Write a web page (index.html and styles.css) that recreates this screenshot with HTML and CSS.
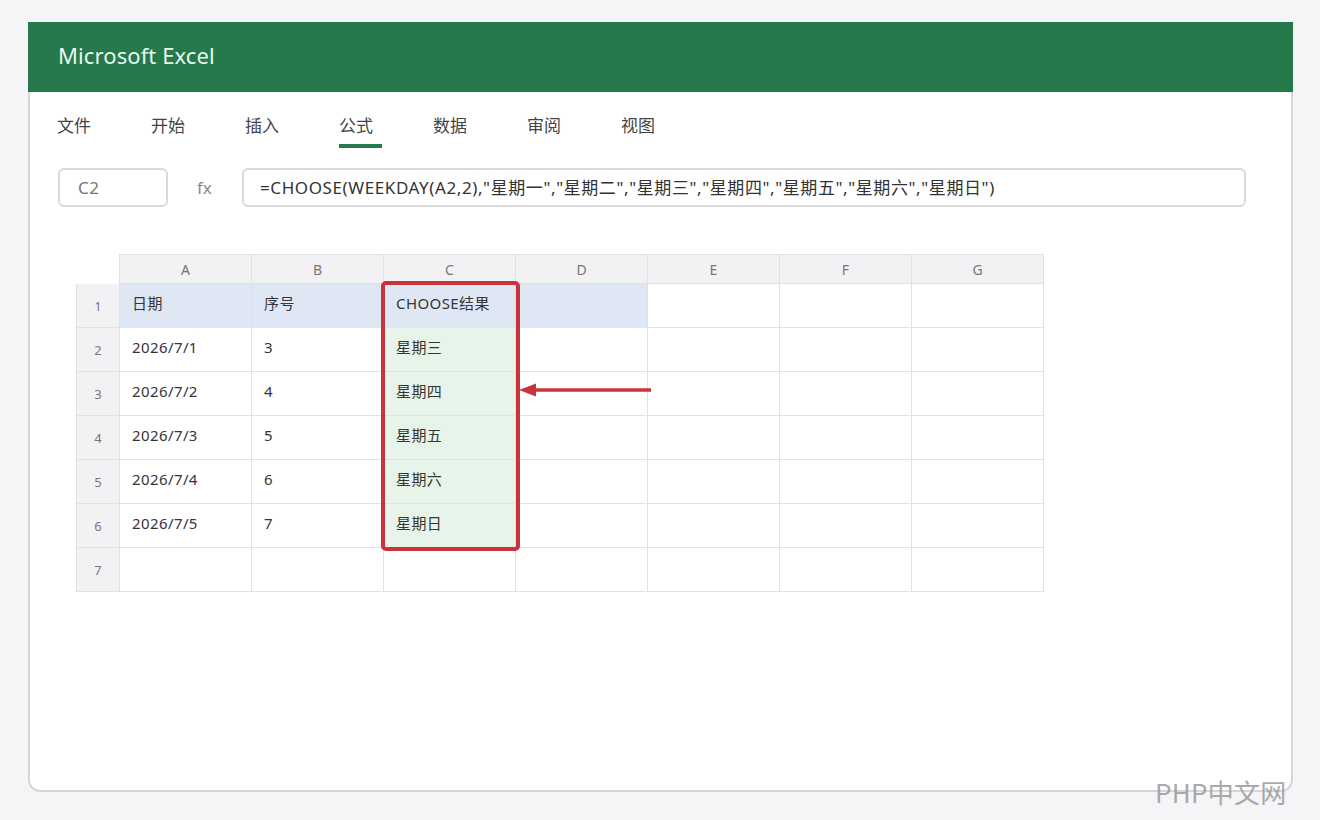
FILE: index.html
```html
<!DOCTYPE html>
<html lang="zh-CN">
<head>
<meta charset="utf-8">
<title>Microsoft Excel</title>
<link rel="stylesheet" href="styles.css">
</head>
<body>
<div class="window">
  <div class="titlebar"><span class="app-title">Microsoft Excel</span></div>
  <div class="tabs">
    <div class="tab">文件</div>
    <div class="tab">开始</div>
    <div class="tab">插入</div>
    <div class="tab active">公式</div>
    <div class="tab">数据</div>
    <div class="tab">审阅</div>
    <div class="tab">视图</div>
  </div>
  <div class="formula-row">
    <div class="namebox">C2</div>
    <div class="fx">fx</div>
    <div class="formula">=CHOOSE(WEEKDAY(A2,2),"星期一","星期二","星期三","星期四","星期五","星期六","星期日")</div>
  </div>
  <div class="sheet-wrap">
    <div class="sheet">
      <div class="corner"></div>
      <div class="colhead first">A</div>
      <div class="colhead">B</div>
      <div class="colhead">C</div>
      <div class="colhead">D</div>
      <div class="colhead">E</div>
      <div class="colhead">F</div>
      <div class="colhead">G</div>

      <div class="rowhead top">1</div>
      <div class="cell hdr">日期</div>
      <div class="cell hdr">序号</div>
      <div class="cell hdr">CHOOSE结果</div>
      <div class="cell hdr"></div>
      <div class="cell"></div>
      <div class="cell"></div>
      <div class="cell"></div>

      <div class="rowhead">2</div>
      <div class="cell">2026/7/1</div>
      <div class="cell">3</div>
      <div class="cell res">星期三</div>
      <div class="cell"></div>
      <div class="cell"></div>
      <div class="cell"></div>
      <div class="cell"></div>

      <div class="rowhead">3</div>
      <div class="cell">2026/7/2</div>
      <div class="cell">4</div>
      <div class="cell res">星期四</div>
      <div class="cell"></div>
      <div class="cell"></div>
      <div class="cell"></div>
      <div class="cell"></div>

      <div class="rowhead">4</div>
      <div class="cell">2026/7/3</div>
      <div class="cell">5</div>
      <div class="cell res">星期五</div>
      <div class="cell"></div>
      <div class="cell"></div>
      <div class="cell"></div>
      <div class="cell"></div>

      <div class="rowhead">5</div>
      <div class="cell">2026/7/4</div>
      <div class="cell">6</div>
      <div class="cell res">星期六</div>
      <div class="cell"></div>
      <div class="cell"></div>
      <div class="cell"></div>
      <div class="cell"></div>

      <div class="rowhead">6</div>
      <div class="cell">2026/7/5</div>
      <div class="cell">7</div>
      <div class="cell res">星期日</div>
      <div class="cell"></div>
      <div class="cell"></div>
      <div class="cell"></div>
      <div class="cell"></div>

      <div class="rowhead">7</div>
      <div class="cell"></div>
      <div class="cell"></div>
      <div class="cell"></div>
      <div class="cell"></div>
      <div class="cell"></div>
      <div class="cell"></div>
      <div class="cell"></div>
    </div>
    <div class="highlight"></div>
    <svg class="arrow" width="140" height="20" viewBox="0 0 140 20">
      <line x1="14" y1="10" x2="135" y2="10" stroke="#c8333c" stroke-width="3.5"/>
      <polygon points="3,10 20,3.5 20,16.5" fill="#c8333c"/>
    </svg>
  </div>
</div>
<div class="watermark">PHP中文网</div>
</body>
</html>
```
FILE: styles.css
```css
* { box-sizing: border-box; }

body {
  margin: 0;
  background: #f5f5f7;
  font-family: "Noto Sans", "Noto Sans CJK SC", sans-serif;
  color: #333;
  position: relative;
  width: 1320px;
  height: 820px;
  overflow: hidden;
}

.window {
  margin: 22px 0 0 28px;
  width: 1265px;
  height: 770px;
  background: #fff;
  border: 2px solid #d6d6da;
  border-top: none;
  border-radius: 0 0 12px 12px;
}

.titlebar {
  margin: 0 -2px;
  height: 70px;
  background: #25794b;
  display: flex;
  align-items: center;
  padding: 0 0 4px 30px;
}

.app-title {
  color: #e8f7ee;
  font-size: 22px;
  letter-spacing: 0.1px;
}

.tabs {
  display: flex;
  padding: 22px 0 0 27px;
}

.tab {
  width: 94px;
  font-size: 17px;
  line-height: 24px;
  color: #444;
  position: relative;
  padding-bottom: 10px;
}

.tab.active::after {
  content: "";
  position: absolute;
  left: 0;
  top: 30px;
  width: 43px;
  height: 4px;
  background: #2a7a4f;
}

.formula-row {
  display: flex;
  margin-top: 20px;
  padding-left: 28px;
  height: 39px;
}

.namebox {
  width: 110px;
  height: 39px;
  border: 2px solid #dadadd;
  border-radius: 6px;
  padding-left: 18px;
  font-size: 17px;
  line-height: 35px;
  color: #777;
  letter-spacing: 0.5px;
}

.fx {
  width: 74px;
  padding-left: 29px;
  font-size: 17px;
  line-height: 39px;
  color: #888;
}

.formula {
  width: 1004px;
  height: 39px;
  border: 2px solid #dadadd;
  border-radius: 6px;
  padding-left: 16px;
  font-size: 17px;
  line-height: 35px;
  color: #333;
  white-space: nowrap;
  letter-spacing: 0.6px;
}

.sheet-wrap {
  position: relative;
  margin: 47px 0 0 46px;
  width: 968px;
}

.sheet {
  display: grid;
  grid-template-columns: 44px repeat(7, 132px);
  grid-template-rows: 30px repeat(7, 44px);
}

.corner {
  border-right: 1px solid #e0e0e5;
}

.colhead {
  background: #f2f2f5;
  border-top: 1px solid #e0e0e5;
  border-right: 1px solid #e0e0e5;
  border-bottom: 1px solid #e0e0e5;
  font-size: 14px;
  color: #777;
  display: flex;
  align-items: center;
  justify-content: center;
}

.rowhead {
  background: #f2f2f5;
  border-left: 1px solid #e0e0e5;
  border-right: 1px solid #e0e0e5;
  border-bottom: 1px solid #e0e0e5;
  font-size: 13px;
  color: #777;
  display: flex;
  align-items: center;
  justify-content: center;
}

.cell {
  border-right: 1px solid #e0e0e5;
  border-bottom: 1px solid #e0e0e5;
  font-size: 15px;
  line-height: 20px;
  padding: 9px 0 0 12px;
  color: #363636;
  white-space: nowrap;
  letter-spacing: 0.4px;
}

.cell.hdr {
  background: #dfe7f5;
  border-bottom-color: #dfe7f5;
}

.cell.res {
  background: #e7f4e9;
}

.highlight {
  position: absolute;
  left: 305px;
  top: 27px;
  width: 139px;
  height: 270px;
  border: 4px solid #c8333c;
  border-radius: 5px;
}

.arrow {
  position: absolute;
  left: 440px;
  top: 126px;
}

.watermark {
  position: absolute;
  left: 1155px;
  top: 773px;
  font-size: 26px;
  letter-spacing: 0.3px;
  color: #9b9b9b;
  opacity: 0.85;
  font-family: "Noto Sans CJK SC", sans-serif;
}
```
